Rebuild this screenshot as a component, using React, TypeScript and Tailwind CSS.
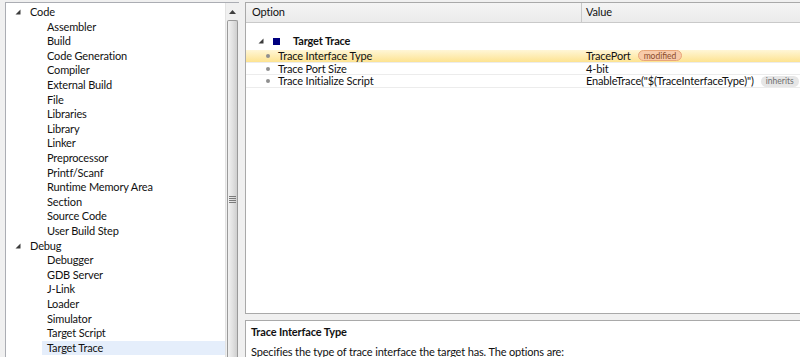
const font = "font-['Lato','Noto_Sans',sans-serif]";

type TreeItem = { label: string; group?: boolean; selected?: boolean };

const tree: TreeItem[] = [
  { label: "Code", group: true },
  { label: "Assembler" },
  { label: "Build" },
  { label: "Code Generation" },
  { label: "Compiler" },
  { label: "External Build" },
  { label: "File" },
  { label: "Libraries" },
  { label: "Library" },
  { label: "Linker" },
  { label: "Preprocessor" },
  { label: "Printf/Scanf" },
  { label: "Runtime Memory Area" },
  { label: "Section" },
  { label: "Source Code" },
  { label: "User Build Step" },
  { label: "Debug", group: true },
  { label: "Debugger" },
  { label: "GDB Server" },
  { label: "J-Link" },
  { label: "Loader" },
  { label: "Simulator" },
  { label: "Target Script" },
  { label: "Target Trace", selected: true },
];

function Expander() {
  return (
    <svg width="6" height="6" viewBox="0 0 6 6" className="shrink-0">
      <polygon points="5.5,0.5 5.5,5.5 0.5,5.5" fill="#3c3c3c" />
    </svg>
  );
}

function Scrollbar() {
  return (
    <div className="flex w-[14px] shrink-0 flex-col border-l border-[#e3e3e3] bg-[#f0f0f0]">
      <div className="flex h-[17px] items-center justify-center">
        <svg width="7" height="4" viewBox="0 0 7 4">
          <polygon points="3.5,0 7,4 0,4" fill="#404040" />
        </svg>
      </div>
      <div className="mx-[1px] flex flex-1 flex-col items-center rounded-t-[2px] border border-b-0 border-[#9a9a9a] bg-linear-to-r from-[#f2f2f2] via-[#e2e2e2] to-[#cfcfcf] pt-[175px]">
        <div className="flex w-[7px] flex-col gap-[1px]">
          <div className="h-[1px] bg-[#7a7a7a]" />
          <div className="h-[1px] bg-[#7a7a7a]" />
          <div className="h-[1px] bg-[#7a7a7a]" />
          <div className="h-[1px] bg-[#7a7a7a]" />
        </div>
      </div>
    </div>
  );
}

function Badge({ kind, children }: { kind: "modified" | "inherits"; children: string }) {
  return (
    <span
      className={`ml-[7px] inline-flex h-[11px] items-center rounded-full px-[5px] text-[8.5px] leading-none tracking-normal ${
        kind === "modified"
          ? "border border-[#e9a679] bg-[#f8caa9] text-[#8a4b2b]"
          : "bg-[#e6e6e6] text-[#6f6f6f]"
      }`}
    >
      {children}
    </span>
  );
}

const rows = [
  { option: "Trace Interface Type", value: "TracePort", badge: "modified" as const, highlight: true },
  { option: "Trace Port Size", value: "4-bit" },
  { option: "Trace Initialize Script", value: 'EnableTrace("$(TraceInterfaceType)")', badge: "inherits" as const },
];

export default function App() {
  return (
    <div
      className={`flex h-[357px] w-[800px] overflow-hidden bg-[#f0f0f0] pt-[2px] text-[11px] tracking-[-0.15px] text-[#111] ${font}`}
    >
      {/* project tree */}
      <div className="ml-[5px] flex w-[234px] shrink-0 border-l border-t border-[#abadb3] bg-white">
        <div className="flex-1 pt-[2px]">
          {tree.map((t) =>
            t.group ? (
              <div key={t.label} className="flex h-[14.6px] items-center pl-[9px]">
                <Expander />
                <span className="ml-[9px]">{t.label}</span>
              </div>
            ) : (
              <div key={t.label} className="flex h-[14.6px] items-center pl-[36px]">
                <span
                  className={`flex h-full flex-1 items-center pl-[5px] ${t.selected ? "bg-[#e5eefb]" : ""}`}
                >
                  {t.label}
                </span>
              </div>
            )
          )}
        </div>
        <Scrollbar />
      </div>

      {/* splitter */}
      <div className="w-[6px] shrink-0" />

      {/* options */}
      <div className="flex flex-1 flex-col">
        <div className="flex flex-1 flex-col border-l border-t border-b border-[#a9a9a9] bg-white">
          <div className="flex h-[20px] border-b border-[#c9c9c9] bg-linear-to-b from-[#f4f4f4] to-[#ebebeb]">
            <div className="flex w-[336px] items-center border-r border-[#c9c9c9] pl-[6px]">Option</div>
            <div className="flex items-center pl-[4px]">Value</div>
          </div>

          <div className="mt-[11px] flex h-[14px] items-center pl-[12px] font-bold">
            <Expander />
            <span className="ml-[9px] h-[7px] w-[7px] bg-[#00007f]" />
            <span className="ml-[13px]">Target Trace</span>
          </div>

          <div className="mt-[2px]">
            {rows.map((r) => (
              <div
                key={r.option}
                className={`flex h-[12.7px] items-center border-b border-[#ececec] leading-[12px] ${
                  r.highlight ? "bg-linear-to-b from-[#fff6d6] to-[#fde390]" : ""
                }`}
              >
                <div className="flex w-[337px] items-center pl-[20px]">
                  <span className="h-[4px] w-[4px] rounded-full bg-[#8f8f8f]" />
                  <span className="ml-[8px]">{r.option}</span>
                </div>
                <div className="flex items-center pl-[3px]">
                  <span>{r.value}</span>
                  {r.badge ? <Badge kind={r.badge}>{r.badge}</Badge> : null}
                </div>
              </div>
            ))}
          </div>
        </div>

        <div className="h-[6px] shrink-0" />

        <div className="h-[37px] shrink-0 border-l border-t border-[#a9a9a9] bg-white pl-[5px] pt-[3px]">
          <div className="font-bold leading-[15px]">Trace Interface Type</div>
          <div className="mt-[6px] leading-[14px]">Specifies the type of trace interface the target has. The options are:</div>
        </div>
      </div>
    </div>
  );
}
